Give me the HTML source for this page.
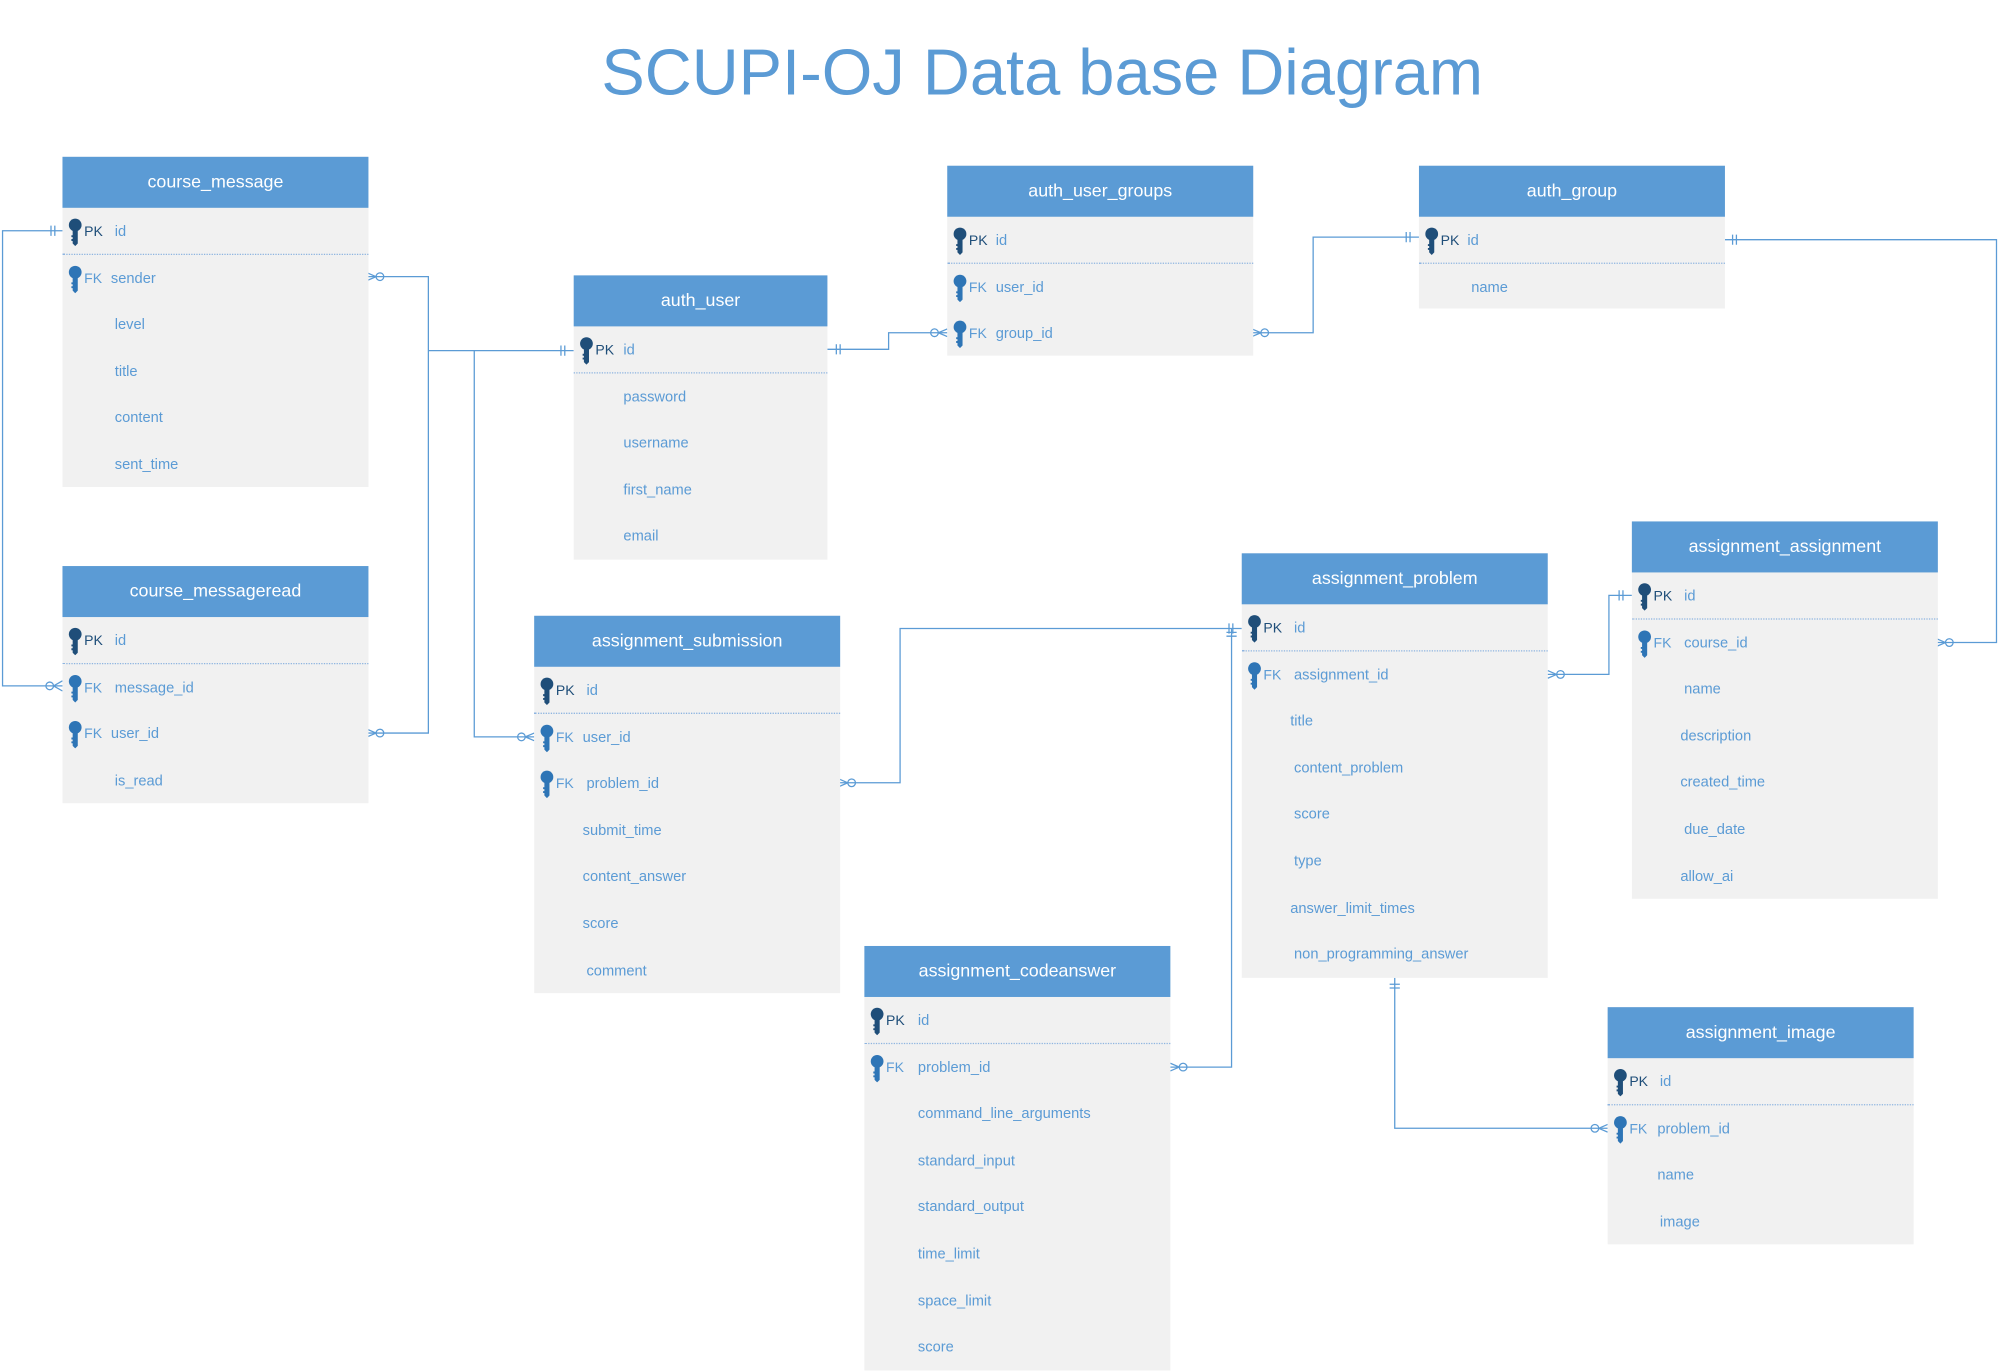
<!DOCTYPE html>
<html><head><meta charset="utf-8"><style>
html,body{margin:0;padding:0;background:#fff;width:1999px;height:1372px;overflow:hidden}
#c{position:absolute;left:0;top:0;width:1568px;height:1076px;transform:scale(1.2749);transform-origin:0 0;font-family:"Liberation Sans",sans-serif}
.t{position:absolute;width:240px;background:#f1f1f1}
.h{height:40px;background:#5b9bd5;color:#fff;font-size:14px;line-height:39px;text-align:center}
.r{position:relative;height:36.6px;line-height:38px;font-size:11.5px;color:#5b9bd5}
.r .n{position:absolute;left:41px}
.r .k{position:absolute;left:17px;font-size:11px}
.r.pk{border-bottom:1px dotted #8db4e0;height:35.6px}
.pk .k{color:#1f4e79}
.fk .k{color:#5b9bd5}
.r svg{position:absolute;left:4px;top:8px}
h1{position:absolute;left:0;width:1635px;top:27px;margin:0;text-align:center;font-weight:normal;font-size:51px;color:#5b9bd5}
svg.l{position:absolute;left:0;top:0}
</style></head><body><div id="c">
<h1>SCUPI-OJ Data base Diagram</h1>
<svg class="l" width="1568" height="1076" fill="none" stroke="#5b9bd5" stroke-width="1">
<path d="M49 181H2V538H49"/><path d="M40 177v8M43 177v8"/><path d="M49 534l-7 4M49 542l-7-4"/><circle cx="39" cy="538" r="3"/>
<path d="M288 217H336V575H288"/><path d="M288 214l7 3M288 220l7-3M288 572l7 3M288 578l7-3"/><circle cx="298" cy="217" r="3"/><circle cx="298" cy="575" r="3"/>
<path d="M336 275H450"/><path d="M440 271v8M443 271v8"/>
<path d="M372 275V578H419"/><path d="M419 575l-7 3M419 581l-7-3"/><circle cx="409" cy="578" r="3"/>
<path d="M649 274H697V261H743"/><path d="M656 270v8M659 270v8"/><path d="M743 258l-7 3M743 264l-7-3"/><circle cx="733" cy="261" r="3"/>
<path d="M982 261H1030V186H1113"/><path d="M982 258l7 3M982 264l7-3"/><circle cx="992" cy="261" r="3"/><path d="M1103 182v8M1106 182v8"/>
<path d="M1353 188H1566V504H1519"/><path d="M1359 184v8M1362 184v8"/><path d="M1519 501l7 3M1519 507l7-3"/><circle cx="1529" cy="504" r="3"/>
<path d="M658 614H706V493H974"/><path d="M658 611l7 3M658 617l7-3"/><circle cx="668" cy="614" r="3"/><path d="M964 489v8M967 489v8"/>
<path d="M1214 529H1262V467H1280"/><path d="M1214 526l7 3M1214 532l7-3"/><circle cx="1224" cy="529" r="3"/><path d="M1270 463v8M1273 463v8"/>
<path d="M918 837H966V493"/><path d="M918 834l7 3M918 840l7-3"/><circle cx="928" cy="837" r="3"/><path d="M962 496h8M962 499h8"/>
<path d="M1094 767V885H1261"/><path d="M1090 772h8M1090 775h8"/><path d="M1261 882l-7 3M1261 888l-7-3"/><circle cx="1251" cy="885" r="3"/>
</svg>
<svg width="0" height="0" style="position:absolute"><defs>
<symbol id="key" viewBox="0 0 12 22"><circle cx="6" cy="5.5" r="5"/><path d="M4 9h4v11l-2 2-2-2v-2h-1v-1.5h1V15h-1v-1.5h1z"/></symbol></defs></svg>

<div class="t" style="left:49px;top:123px;height:259px"><div class="h">course_message</div>
<div class="r pk"><svg width="12" height="22" fill="#1f4e79"><use href="#key"/></svg><span class="k">PK</span><span class="n">id</span></div>
<div class="r fk"><svg width="12" height="22" fill="#2e75b6"><use href="#key"/></svg><span class="k">FK</span><span class="n" style="left:38px">sender</span></div>
<div class="r"><span class="n">level</span></div><div class="r"><span class="n">title</span></div><div class="r"><span class="n">content</span></div><div class="r"><span class="n">sent_time</span></div></div>

<div class="t" style="left:49px;top:444px;height:186px"><div class="h">course_messageread</div>
<div class="r pk"><svg width="12" height="22" fill="#1f4e79"><use href="#key"/></svg><span class="k">PK</span><span class="n">id</span></div>
<div class="r fk"><svg width="12" height="22" fill="#2e75b6"><use href="#key"/></svg><span class="k">FK</span><span class="n">message_id</span></div>
<div class="r fk"><svg width="12" height="22" fill="#2e75b6"><use href="#key"/></svg><span class="k">FK</span><span class="n" style="left:38px">user_id</span></div>
<div class="r"><span class="n">is_read</span></div></div>

<div class="t" style="left:450px;top:216px;width:199px;height:223px"><div class="h">auth_user</div>
<div class="r pk"><svg width="12" height="22" fill="#1f4e79"><use href="#key"/></svg><span class="k">PK</span><span class="n" style="left:39px">id</span></div>
<div class="r"><span class="n" style="left:39px">password</span></div><div class="r"><span class="n" style="left:39px">username</span></div><div class="r"><span class="n" style="left:39px">first_name</span></div><div class="r"><span class="n" style="left:39px">email</span></div></div>

<div class="t" style="left:743px;top:130px;height:149px"><div class="h">auth_user_groups</div>
<div class="r pk"><svg width="12" height="22" fill="#1f4e79"><use href="#key"/></svg><span class="k">PK</span><span class="n" style="left:38px">id</span></div>
<div class="r fk"><svg width="12" height="22" fill="#2e75b6"><use href="#key"/></svg><span class="k">FK</span><span class="n" style="left:38px">user_id</span></div>
<div class="r fk"><svg width="12" height="22" fill="#2e75b6"><use href="#key"/></svg><span class="k">FK</span><span class="n" style="left:38px">group_id</span></div></div>

<div class="t" style="left:1113px;top:130px;height:112px"><div class="h">auth_group</div>
<div class="r pk"><svg width="12" height="22" fill="#1f4e79"><use href="#key"/></svg><span class="k">PK</span><span class="n" style="left:38px">id</span></div>
<div class="r"><span class="n">name</span></div></div>

<div class="t" style="left:419px;top:483px;height:296px"><div class="h">assignment_submission</div>
<div class="r pk"><svg width="12" height="22" fill="#1f4e79"><use href="#key"/></svg><span class="k">PK</span><span class="n">id</span></div>
<div class="r fk"><svg width="12" height="22" fill="#2e75b6"><use href="#key"/></svg><span class="k">FK</span><span class="n" style="left:38px">user_id</span></div>
<div class="r fk"><svg width="12" height="22" fill="#2e75b6"><use href="#key"/></svg><span class="k">FK</span><span class="n">problem_id</span></div>
<div class="r"><span class="n" style="left:38px">submit_time</span></div><div class="r"><span class="n" style="left:38px">content_answer</span></div><div class="r"><span class="n" style="left:38px">score</span></div><div class="r"><span class="n">comment</span></div></div>

<div class="t" style="left:974px;top:434px;height:333px"><div class="h">assignment_problem</div>
<div class="r pk"><svg width="12" height="22" fill="#1f4e79"><use href="#key"/></svg><span class="k">PK</span><span class="n">id</span></div>
<div class="r fk"><svg width="12" height="22" fill="#2e75b6"><use href="#key"/></svg><span class="k">FK</span><span class="n">assignment_id</span></div>
<div class="r"><span class="n" style="left:38px">title</span></div><div class="r"><span class="n">content_problem</span></div><div class="r"><span class="n">score</span></div><div class="r"><span class="n">type</span></div><div class="r"><span class="n" style="left:38px">answer_limit_times</span></div><div class="r"><span class="n">non_programming_answer</span></div></div>

<div class="t" style="left:1280px;top:409px;height:296px"><div class="h">assignment_assignment</div>
<div class="r pk"><svg width="12" height="22" fill="#1f4e79"><use href="#key"/></svg><span class="k">PK</span><span class="n">id</span></div>
<div class="r fk"><svg width="12" height="22" fill="#2e75b6"><use href="#key"/></svg><span class="k">FK</span><span class="n">course_id</span></div>
<div class="r"><span class="n">name</span></div><div class="r"><span class="n" style="left:38px">description</span></div><div class="r"><span class="n" style="left:38px">created_time</span></div><div class="r"><span class="n">due_date</span></div><div class="r"><span class="n" style="left:38px">allow_ai</span></div></div>

<div class="t" style="left:678px;top:742px;height:333px"><div class="h">assignment_codeanswer</div>
<div class="r pk"><svg width="12" height="22" fill="#1f4e79"><use href="#key"/></svg><span class="k">PK</span><span class="n" style="left:42px">id</span></div>
<div class="r fk"><svg width="12" height="22" fill="#2e75b6"><use href="#key"/></svg><span class="k">FK</span><span class="n" style="left:42px">problem_id</span></div>
<div class="r"><span class="n" style="left:42px">command_line_arguments</span></div><div class="r"><span class="n" style="left:42px">standard_input</span></div><div class="r"><span class="n" style="left:42px">standard_output</span></div><div class="r"><span class="n" style="left:42px">time_limit</span></div><div class="r"><span class="n" style="left:42px">space_limit</span></div><div class="r"><span class="n" style="left:42px">score</span></div></div>

<div class="t" style="left:1261px;top:790px;height:186px"><div class="h">assignment_image</div>
<div class="r pk"><svg width="12" height="22" fill="#1f4e79"><use href="#key"/></svg><span class="k">PK</span><span class="n">id</span></div>
<div class="r fk"><svg width="12" height="22" fill="#2e75b6"><use href="#key"/></svg><span class="k">FK</span><span class="n" style="left:39px">problem_id</span></div>
<div class="r"><span class="n" style="left:39px">name</span></div><div class="r"><span class="n">image</span></div></div>
</div></body></html>
